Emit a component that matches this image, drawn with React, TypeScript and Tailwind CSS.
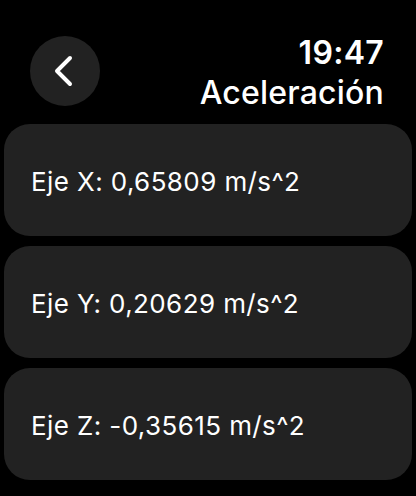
import React from 'react';

const axes = [
  { label: 'Eje X', value: '0,65809' },
  { label: 'Eje Y', value: '0,20629' },
  { label: 'Eje Z', value: '-0,35615' },
];

export default function App() {
  return (
    <div
      className="w-[416px] h-[496px] bg-black text-white overflow-hidden"
      style={{ fontFamily: 'Inter, "Noto Sans", sans-serif' }}
    >
      {/* Header */}
      <div className="flex items-start justify-between pl-[30px] pr-[32px] pt-[36px] h-[124px]">
        <button className="w-[70px] h-[70px] rounded-full bg-[#222222] flex items-center justify-center">
          <svg width="22" height="32" viewBox="0 0 22 32" fill="none">
            <path d="M16 3 L3 16 L16 29" stroke="white" strokeWidth="4" strokeLinecap="round" strokeLinejoin="round" />
          </svg>
        </button>
        <div className="flex flex-col items-end -mt-[3px]">
          <span className="text-[32px] leading-[40px] font-semibold tracking-[0.3px]">19:47</span>
          <span className="text-[32px] leading-[40px] font-medium tracking-[0.2px]">Aceleración</span>
        </div>
      </div>

      {/* Axis cards */}
      <div className="flex flex-col gap-[10px] px-[4px]">
        {axes.map((a) => (
          <div key={a.label} className="h-[112px] rounded-[26px] bg-[#222222] flex items-center pl-[27px]">
            <span className="text-[26px] tracking-[0.4px] pt-[2px]">
              {a.label}: {a.value} m/s^2
            </span>
          </div>
        ))}
      </div>
    </div>
  );
}
